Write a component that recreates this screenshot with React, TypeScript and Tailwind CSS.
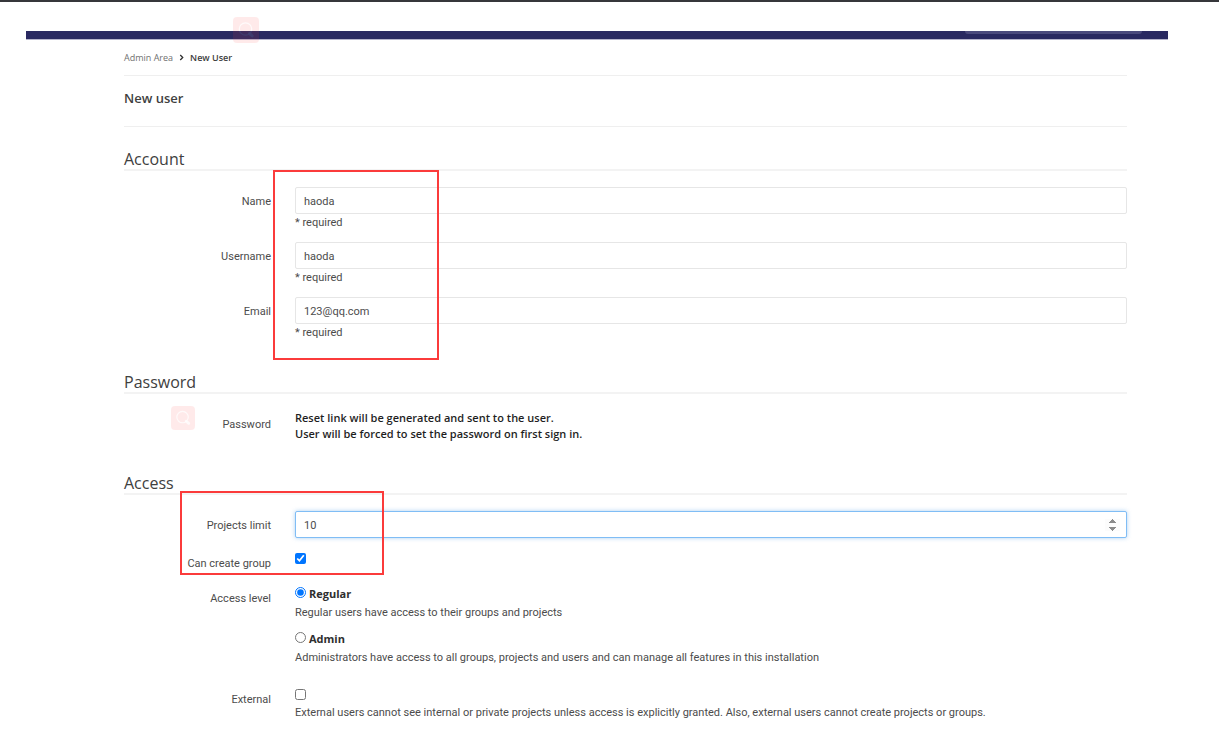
import type { ReactNode } from "react";

function SearchBadge({ className }: { className: string }) {
  return (
    <span
      aria-hidden="true"
      className={`pointer-events-none absolute flex items-center justify-center rounded bg-[#ff4040] opacity-10 ${className}`}
    >
      <svg viewBox="0 0 26 26" className="size-full" fill="none" stroke="#fff" strokeOpacity="0.8">
        <circle cx="12.5" cy="12" r="6.2" strokeWidth="1.2" />
        <path d="M16.5 16.5 L19.2 18.8" strokeWidth="3" strokeLinecap="round" />
      </svg>
    </span>
  );
}

function Section({ title, children }: { title: string; children: ReactNode }) {
  return (
    <section className="relative pt-5">
      <h2 className="mb-4 border-b-2 border-[#f3f3f3] font-['Open_Sans','Noto_Sans',sans-serif] text-base leading-5 text-[#404040]">{title}</h2>
      {children}
    </section>
  );
}

function Row({ label, htmlFor, children }: { label: string; htmlFor?: string; children: ReactNode }) {
  const style = "pt-1 pr-6 text-right leading-[22px] text-[#4c4c4c]";
  return (
    <div className="mb-[11px] grid grid-cols-[171px_1fr]">
      {htmlFor ? (
        <label htmlFor={htmlFor} className={style}>{label}</label>
      ) : (
        <span className={style}>{label}</span>
      )}
      <div>{children}</div>
    </div>
  );
}

function TextField({ id, label, type, value }: { id: string; label: string; type: string; value: string }) {
  return (
    <Row label={label} htmlFor={id}>
      <input
        id={id}
        type={type}
        defaultValue={value}
        className="block h-[27px] w-full rounded-xs border border-[#e6e6e6] bg-white px-2 pt-0.5 text-[#4c4c4c] outline-none"
      />
      <span className="block leading-[17px]">* required</span>
    </Row>
  );
}

function RoleOption({ id, title, text, checked }: { id: string; title: string; text: string; checked?: boolean }) {
  return (
    <div className="mb-[7px]">
      <div className="flex h-5 items-center gap-[3px]">
        <input id={id} type="radio" name="level" defaultChecked={checked} className="mb-1 size-[11px]" />
        <label htmlFor={id} className="font-['Open_Sans','Noto_Sans',sans-serif] font-bold text-[#2e2e2e]">{title}</label>
      </div>
      <p className="leading-[18px]">{text}</p>
    </div>
  );
}

export default function App() {
  return (
    <div className="min-h-screen border-t-2 border-[#36373b] bg-white font-[Roboto,'Open_Sans',sans-serif] text-[11px] text-[#4c4c4c]">
      <header className="relative mt-[29px] mr-[51px] ml-[26px] flex h-[9px] justify-end border-b border-[#b5b4cc] bg-[#292961] pr-[26px]">
        <div className="h-[3px] w-[177px] rounded-b-sm bg-[#4a4a7d]" />
        <SearchBadge className="-top-[14px] left-[207px] size-[26px]" />
      </header>
      <main className="mr-[92px] ml-[124px]">
        <nav aria-label="Breadcrumb" className="flex h-9 items-center border-b border-[#efefef] font-['Open_Sans','Noto_Sans',sans-serif] text-[9px]">
          <a href="#admin" className="text-[#707070]">Admin Area</a>
          <svg viewBox="0 0 6 8" className="mx-[6px] mb-px h-[7px] w-[5px]" fill="none" stroke="#2e2e2e" strokeWidth="1.5">
            <path d="M1.5 1 L4.5 4 L1.5 7" />
          </svg>
          <a href="#new" className="font-semibold text-[#404040]">New User</a>
        </nav>
        <h1 className="mb-[2px] border-b border-[#efefef] pt-3 pb-[18px] font-['Open_Sans','Noto_Sans',sans-serif] text-[13px] leading-5 font-semibold text-[#404040]">
          New user
        </h1>
        <form>
          <Section title="Account">
            <TextField id="name" label="Name" type="text" value="haoda" />
            <TextField id="username" label="Username" type="text" value="haoda" />
            <TextField id="email" label="Email" type="text" value="123@qq.com" />
            <div className="pointer-events-none absolute top-[41px] left-[149px] h-[190px] w-[166px] border-2 border-[#fb3b3b]" />
          </Section>
          <Section title="Password">
            <Row label="Password">
              <p className="font-['Open_Sans','Noto_Sans',sans-serif] leading-4 font-semibold text-[#1f1f1f]">
                Reset link will be generated and sent to the user.
                <br />
                User will be forced to set the password on first sign in.
              </p>
            </Row>
            <SearchBadge className="top-[54px] left-[47px] size-6" />
          </Section>
          <Section title="Access">
            <Row label="Projects limit" htmlFor="limit">
              <input
                id="limit"
                type="number"
                defaultValue={10}
                className="block h-[27px] w-full rounded-xs border border-[#80bdf5] bg-white pt-0.5 pr-[6px] pl-2 text-[#4c4c4c] shadow-[0_0_4px_#73afea99] outline-none [&::-webkit-inner-spin-button]:opacity-100"
              />
            </Row>
            <Row label="Can create group" htmlFor="group">
              <input id="group" type="checkbox" defaultChecked className="mt-1 block size-[11px]" />
            </Row>
            <div className="-mt-0.5">
              <Row label="Access level">
                <RoleOption id="regular" title="Regular" text="Regular users have access to their groups and projects" checked />
                <RoleOption
                  id="admin"
                  title="Admin"
                  text="Administrators have access to all groups, projects and users and can manage all features in this installation"
                />
              </Row>
            </div>
            <Row label="External" htmlFor="external">
              <input id="external" type="checkbox" className="mt-1 mb-1 block size-[11px]" />
              <p className="leading-[18px]">
                External users cannot see internal or private projects unless access is explicitly granted. Also, external users cannot create projects or groups.
              </p>
            </Row>
            <div className="pointer-events-none absolute top-[38px] left-[56px] h-[84px] w-[204px] border-2 border-[#fb3b3b]" />
          </Section>
        </form>
      </main>
    </div>
  );
}
